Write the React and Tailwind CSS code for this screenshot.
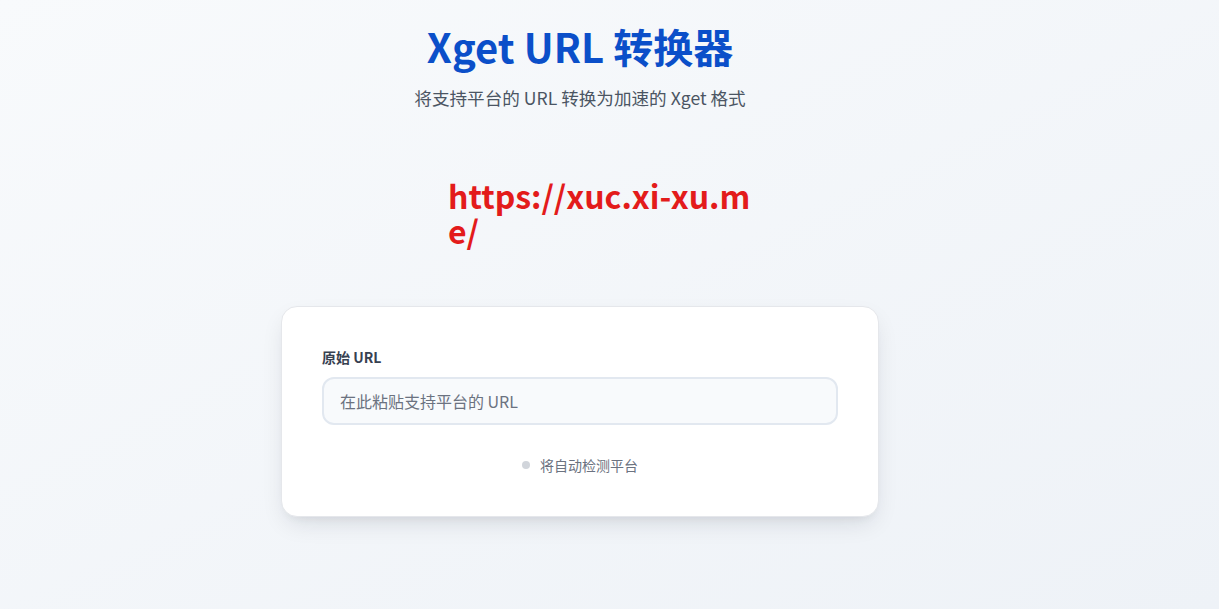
import React, { useState } from 'react';

const App = () => {
    const [url, setUrl] = useState('');

    return (
        <div
            className="min-h-[609px] w-full bg-gradient-to-br from-[#f8fafc] to-[#eef2f7]"
            style={{ fontFamily: '"Noto Sans CJK SC", "Noto Sans", sans-serif' }}
        >
            <div className="w-[1160px] flex flex-col items-center pt-[20px]">
                <h1 className="text-[40px] leading-[52px] font-bold text-[#0b4fc9]">
                    Xget URL 转换器
                </h1>
                <p className="mt-[14px] text-[17.6px] leading-[24px] text-[#4b5563]">
                    将支持平台的 URL 转换为加速的 Xget 格式
                </p>

                <div className="mt-[68px] w-[364px] pl-[50px] break-all text-[32px] leading-[35px] font-bold text-[#e31b1b]">
                    https://xuc.xi-xu.me/
                </div>

                <div className="mt-[58px] w-[598px] bg-white border border-[#e5e7eb] rounded-2xl shadow-[0_10px_25px_-5px_rgba(15,23,42,0.12),0_6px_10px_-6px_rgba(15,23,42,0.08)] px-[40px] pt-[40px] pb-[41px]">
                    <label className="block text-[14px] leading-[20px] font-bold text-[#374151]">
                        原始 URL
                    </label>
                    <input
                        type="text"
                        value={url}
                        onChange={(e) => setUrl(e.target.value)}
                        placeholder="在此粘贴支持平台的 URL"
                        className="mt-[10px] w-full h-[48px] rounded-xl border-2 border-[#e2e8f0] bg-[#f8fafc] px-[16px] text-[16px] text-[#374151] placeholder:text-[#6b7280] outline-none"
                    />
                    <div className="mt-[30px] flex items-center justify-center gap-[10px] text-[14px] leading-[20px] text-[#6b7280]">
                        <span className="w-[8px] h-[8px] rounded-full bg-[#d1d5db]" />
                        <span>将自动检测平台</span>
                    </div>
                </div>
            </div>
        </div>
    );
};

export default App;
